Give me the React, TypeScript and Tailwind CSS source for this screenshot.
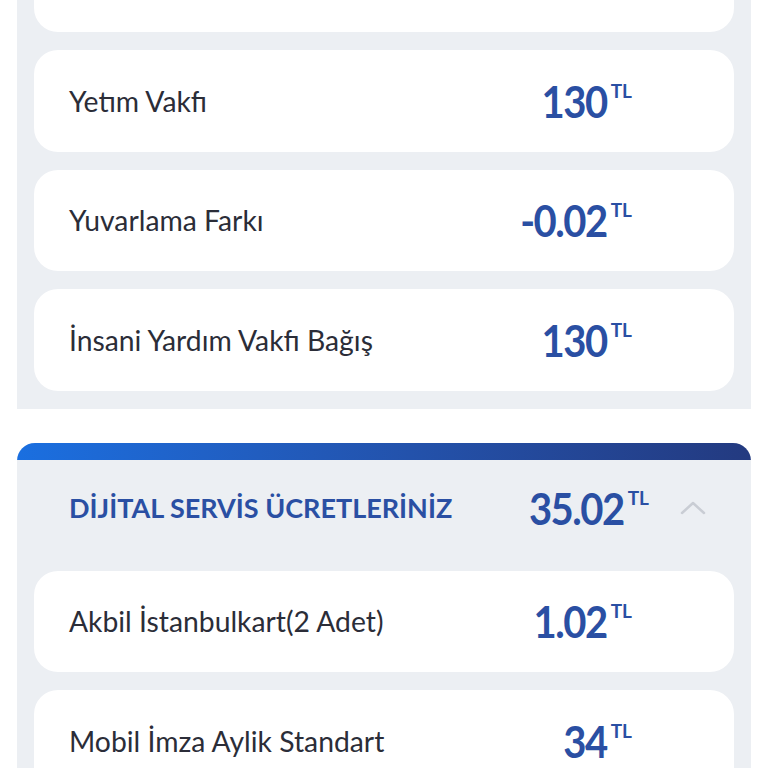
import React from 'react';

type Row = { label: string; amount: string };

const topRows: Row[] = [
    { label: 'Yetım Vakfı', amount: '130' },
    { label: 'Yuvarlama Farkı', amount: '-0.02' },
    { label: 'İnsani Yardım Vakfı Bağış', amount: '130' },
];

const digitalRows: Row[] = [
    { label: 'Akbil İstanbulkart(2 Adet)', amount: '1.02' },
    { label: 'Mobil İmza Aylik Standart', amount: '34' },
];

const Amount: React.FC<{ value: string }> = ({ value }) => (
    <div className="flex items-start text-[#2a4fa3]">
        <span className="inline-block scale-y-[1.12] text-[40px] leading-[40px] font-bold tracking-[-1.5px]">{value}</span>
        <span className="ml-[4px] mt-[0px] text-[19px] leading-[20px] font-bold">TL</span>
    </div>
);

const ItemCard: React.FC<Row> = ({ label, amount }) => (
    <div className="h-[101.5px] shrink-0 bg-white rounded-[24px] flex items-center justify-between pl-[35px] pr-[102px]">
        <span className="text-[28.3px] text-[#2b2d38]">{label}</span>
        <Amount value={amount} />
    </div>
);

export default function App() {
    return (
        <div className="w-[768px] h-[768px] overflow-hidden bg-white" style={{ fontFamily: 'Lato, "Open Sans", sans-serif' }}>
            <div className="mx-[17px] -mt-[69.5px] bg-[#eceff3] px-[17px] pb-[18px] flex flex-col gap-[18px]">
                {/* card scrolled above the top edge */}
                <div className="h-[101.5px] shrink-0 bg-white rounded-[24px]" />
                {topRows.map(r => (
                    <ItemCard key={r.label} {...r} />
                ))}
            </div>

            <div className="mx-[17px] mt-[34px] bg-[#eceff3] rounded-t-[18px] overflow-hidden">
                <div className="h-[17px] bg-gradient-to-r from-[#1a6fe0] to-[#233a80]" />
                <div className="h-[111px] pb-[14px] flex items-center pl-[52px] pr-[44px]">
                    <span className="text-[27px] font-bold text-[#2a4fa3]">DİJİTAL SERVİS ÜCRETLERİNİZ</span>
                    <div className="ml-auto flex items-center">
                        <Amount value="35.02" />
                        <svg className="ml-[30px]" width="28" height="16" viewBox="0 0 28 16" fill="none">
                            <path d="M3 13 L14 3 L25 13" stroke="#c9cdd4" strokeWidth="2.5" strokeLinecap="round" strokeLinejoin="round" />
                        </svg>
                    </div>
                </div>
                <div className="px-[17px] flex flex-col gap-[18px]">
                    {digitalRows.map(r => (
                        <ItemCard key={r.label} {...r} />
                    ))}
                </div>
            </div>
        </div>
    );
}
